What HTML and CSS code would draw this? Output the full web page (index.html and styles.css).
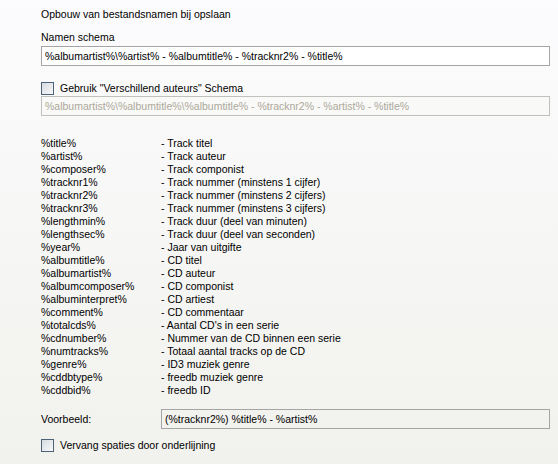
FILE: index.html
```html
<!DOCTYPE html>
<html>
  <head>
    <meta charset="utf-8">
    <title>Bestandsnamen</title>
    <link rel="stylesheet" href="styles.css">
  </head>
  <body>
    <div class="page">
      <p class="heading">Opbouw van bestandsnamen bij opslaan</p>

      <p class="label">Namen schema</p>
      <div class="field">%albumartist%\%artist% - %albumtitle% - %tracknr2% - %title%</div>

      <div class="check check1"><span class="box"></span>Gebruik "Verschillend auteurs" Schema</div>
      <div class="field disabled">%albumartist%\%albumtitle%\%albumtitle% - %tracknr2% - %artist% - %title%</div>

      <div class="vars">
        <span>%title%</span><span>- Track titel</span>
        <span>%artist%</span><span>- Track auteur</span>
        <span>%composer%</span><span>- Track componist</span>
        <span>%tracknr1%</span><span>- Track nummer (minstens 1 cijfer)</span>
        <span>%tracknr2%</span><span>- Track nummer (minstens 2 cijfers)</span>
        <span>%tracknr3%</span><span>- Track nummer (minstens 3 cijfers)</span>
        <span>%lengthmin%</span><span>- Track duur (deel van minuten)</span>
        <span>%lengthsec%</span><span>- Track duur (deel van seconden)</span>
        <span>%year%</span><span>- Jaar van uitgifte</span>
        <span>%albumtitle%</span><span>- CD titel</span>
        <span>%albumartist%</span><span>- CD auteur</span>
        <span>%albumcomposer%</span><span>- CD componist</span>
        <span>%albuminterpret%</span><span>- CD artiest</span>
        <span>%comment%</span><span>- CD commentaar</span>
        <span>%totalcds%</span><span>- Aantal CD's in een serie</span>
        <span>%cdnumber%</span><span>- Nummer van de CD binnen een serie</span>
        <span>%numtracks%</span><span>- Totaal aantal tracks op de CD</span>
        <span>%genre%</span><span>- ID3 muziek genre</span>
        <span>%cddbtype%</span><span>- freedb muziek genre</span>
        <span>%cddbid%</span><span>- freedb ID</span>
      </div>

      <div class="example">
        <span class="example-label">Voorbeeld:</span>
        <div class="field readonly">(%tracknr2%) %title% - %artist%</div>
      </div>

      <div class="check check2"><span class="box"></span>Vervang spaties door onderlijning</div>
    </div>
  </body>
</html>
```

FILE: styles.css
```css
html, body {
  margin: 0;
  height: 100%;
}

body {
  background: linear-gradient(#fcfcfe, #f1f1ed);
  font-family: "Liberation Sans", Arial, sans-serif;
  font-size: 10.5px;
  color: #000;
}

.page {
  padding: 8px 8px 0 41px;
}

p {
  margin: 0;
  line-height: 13px;
}

.label {
  margin-top: 10px;
}

.field {
  box-sizing: border-box;
  width: 509px;
  height: 20px;
  margin-top: 2px;
  padding: 0 3px;
  line-height: 18px;
  border: 1px solid #a5a5a5;
  background: #fff;
  white-space: nowrap;
  overflow: hidden;
}

.field.disabled {
  margin-top: 1px;
  color: #aca899;
  background: #f9f9f8;
  border-color: #c0c0bc;
}

.field.readonly {
  width: 389px;
  margin-top: 0;
  background: #f2f2ef;
}

.check {
  display: flex;
  align-items: center;
  height: 13px;
  line-height: 13px;
}

.check1 {
  margin-top: 16px;
}

.check2 {
  margin-top: 10px;
}

.box {
  box-sizing: border-box;
  width: 13px;
  height: 13px;
  margin-right: 6px;
  border: 1px solid #4e6277;
  background: linear-gradient(135deg, #d6dbe0, #f8f9fa);
}

.vars {
  display: grid;
  grid-template-columns: 120px auto;
  margin-top: 21px;
  line-height: 13px;
}

.example {
  display: flex;
  align-items: center;
  margin-top: 12px;
}

.example-label {
  width: 120px;
}
```
